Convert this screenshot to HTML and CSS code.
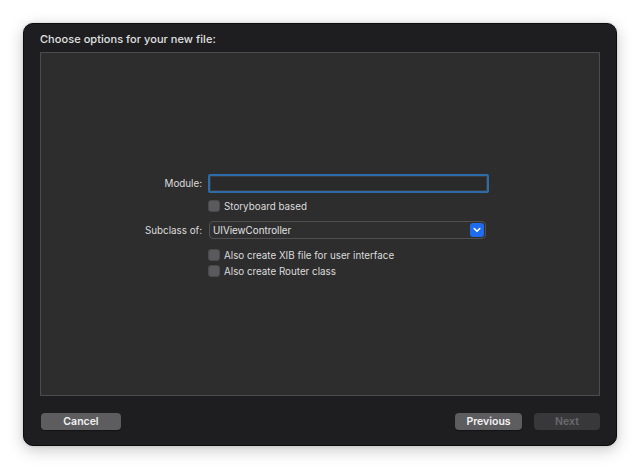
FILE: index.html
```html
<!DOCTYPE html>
<html lang="en">
<head>
    <meta charset="UTF-8">
    <title>New File</title>
    <link rel="stylesheet" href="styles.css">
</head>
<body>
    <div class="sheet">
        <div class="sheet-title">Choose options for your new file:</div>
        <div class="panel">
            <div class="form">
                <div class="row row-module">
                    <label class="label">Module:</label>
                    <div class="text-field"></div>
                </div>
                <div class="row row-check first-check">
                    <span class="label"></span>
                    <span class="check"><span class="box"></span>Storyboard based</span>
                </div>
                <div class="row row-popup">
                    <label class="label">Subclass of:</label>
                    <div class="popup">
                        <span class="popup-value">UIViewController</span>
                        <span class="popup-arrow">
                            <svg width="8" height="6" viewBox="0 0 8 6"><path d="M1.2 1.5 L4 4.3 L6.8 1.5" fill="none" stroke="#fff" stroke-width="1.6" stroke-linecap="round" stroke-linejoin="round"/></svg>
                        </span>
                    </div>
                </div>
                <div class="row row-check xib-check">
                    <span class="label"></span>
                    <span class="check"><span class="box"></span>Also create XIB file for user interface</span>
                </div>
                <div class="row row-check router-check">
                    <span class="label"></span>
                    <span class="check"><span class="box"></span>Also create Router class</span>
                </div>
            </div>
        </div>
        <div class="footer">
            <button class="btn">Cancel</button>
            <div class="footer-right">
                <button class="btn btn-prev">Previous</button>
                <button class="btn btn-disabled">Next</button>
            </div>
        </div>
    </div>
</body>
</html>
```

FILE: styles.css
```css
html, body {
    margin: 0;
    padding: 0;
    background: #ffffff;
}
body {
    padding: 23px;
    font-family: Inter, "Liberation Sans", Arial, sans-serif;
    font-size: 9.8px;
    color: #dedede;
}
.sheet {
    box-sizing: border-box;
    width: 594px;
    height: 423px;
    background-color: #1e1e21;
    border: 1px solid #0c0c0d;
    border-radius: 10px;
    box-shadow: 0 4px 16px rgba(0, 0, 0, 0.22), 0 0 3px rgba(0, 0, 0, 0.15);
    padding: 0 16px;
    display: flex;
    flex-direction: column;
}
.sheet-title {
    height: 28px;
    line-height: 30px;
    font-size: 11px;
    font-weight: 500;
    color: #e0e0e0;
    letter-spacing: 0.05px;
}
.panel {
    box-sizing: border-box;
    height: 344px;
    background-color: #2d2d2d;
    border: 1px solid #4c4c4c;
}
.form {
    margin-top: 121px;
    display: flex;
    flex-direction: column;
}
.row {
    display: flex;
    align-items: center;
}
.label {
    width: 161px;
    margin-right: 6px;
    text-align: right;
    color: #dcdcdc;
}
.row-module {
    height: 19px;
}
.text-field {
    box-sizing: border-box;
    width: 281px;
    height: 19px;
    background-color: #2a2a2a;
    border: 2px solid #2b6ca9;
    border-radius: 2px;
    box-shadow: inset 0 0 0 1px #3b3b3b;
}
.row-check {
    height: 14px;
}
.first-check {
    margin-top: 6px;
}
.xib-check {
    margin-top: 9px;
}
.router-check {
    margin-top: 2px;
}
.check {
    display: flex;
    align-items: center;
    color: #dcdcdc;
}
.box {
    box-sizing: border-box;
    width: 12px;
    height: 12px;
    margin-right: 4px;
    border-radius: 3px;
    background-color: #5a5a5c;
    border: 1px solid #4a4a4c;
}
.row-popup {
    height: 18px;
    margin-top: 8px;
}
.popup {
    box-sizing: border-box;
    width: 277px;
    height: 18px;
    margin-left: 1px;
    background-color: #2f2f30;
    border: 1px solid #505052;
    border-radius: 4px;
    display: flex;
    align-items: center;
    justify-content: space-between;
    padding: 0 1px 0 3px;
}
.popup-value {
    color: #e2e2e2;
}
.popup-arrow {
    width: 14px;
    height: 14px;
    border-radius: 3px;
    background-color: #1e6cf0;
    display: flex;
    align-items: center;
    justify-content: center;
}
.footer {
    flex: 1;
    display: flex;
    justify-content: space-between;
    align-items: flex-start;
    padding-top: 17px;
}
.footer-right {
    display: flex;
    gap: 12px;
}
.btn {
    box-sizing: border-box;
    height: 17px;
    width: 80px;
    border: none;
    border-radius: 4px;
    background-color: #5d5d60;
    color: #f2f2f2;
    font-family: Inter, "Liberation Sans", Arial, sans-serif;
    font-size: 10.5px;
    font-weight: 600;
    padding: 0;
    margin-left: 1px;
    box-shadow: 0 1px 1px rgba(0, 0, 0, 0.35);
}
.btn-prev {
    width: 67px;
}
.btn-disabled {
    width: 66px;
    margin-left: 0;
    background-color: #38383b;
    color: #6a6a6d;
    box-shadow: none;
}
```
